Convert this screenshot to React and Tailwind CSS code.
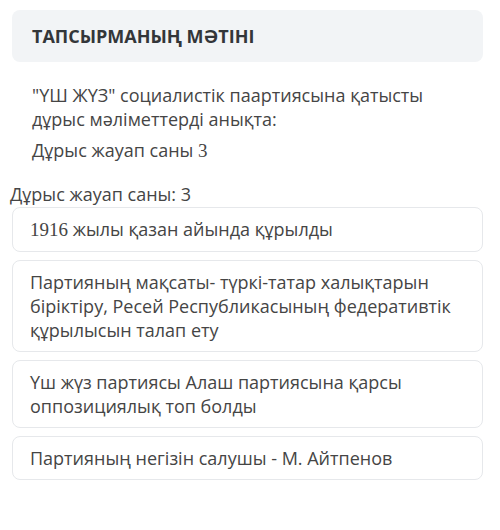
export default function App() {
  const sans = { fontFamily: '"Open Sans", "Noto Sans", sans-serif' };
  const options = [
    <><span style={{ fontFamily: '"Liberation Serif", serif' }} className="text-[19px]">1916</span> жылы қазан айында құрылды</>,
    <>Партияның мақсаты- түркі-татар халықтарын біріктіру, Ресей Республикасының федеративтік құрылысын талап ету</>,
    <>Үш жүз партиясы Алаш партиясына қарсы оппозициялық топ болды</>,
    <>Партияның негізін салушы - М. Айтпенов</>,
  ];
  return (
    <div className="w-[500px] h-[530px] bg-white text-[#454545] pt-[10px]" style={sans}>
      <div className="mx-[12px] w-[471px] h-[52px] bg-[#f2f4f6] rounded-lg px-[20px] flex items-center">
        <span className="font-bold text-[18px] text-[#333639]">ТАПСЫРМАНЫҢ МӘТІНІ</span>
      </div>
      <div className="pl-[32px] pr-[40px] pt-[21px] text-[18px] leading-[24px]">
        <p>"ҮШ ЖҮЗ" социалистік паартиясына қатысты дұрыс мәліметтерді анықта:</p>
        <p className="mt-[7px]">Дұрыс жауап саны <span style={{ fontFamily: '"Liberation Serif", serif' }} className="text-[19px]">3</span></p>
      </div>
      <div className="pl-[10px] mt-[19px] text-[18px] leading-[24px]">Дұрыс жауап саны: 3</div>
      <div className="mt-[1px] mx-[12px] w-[471px] flex flex-col gap-[8px]">
        {options.map((o, i) => (
          <div key={i} className="border border-[#e6e8eb] rounded-lg pl-[17px] pr-[20px] py-[9px] text-[18px] leading-[24px]">
            {o}
          </div>
        ))}
      </div>
    </div>
  );
}
